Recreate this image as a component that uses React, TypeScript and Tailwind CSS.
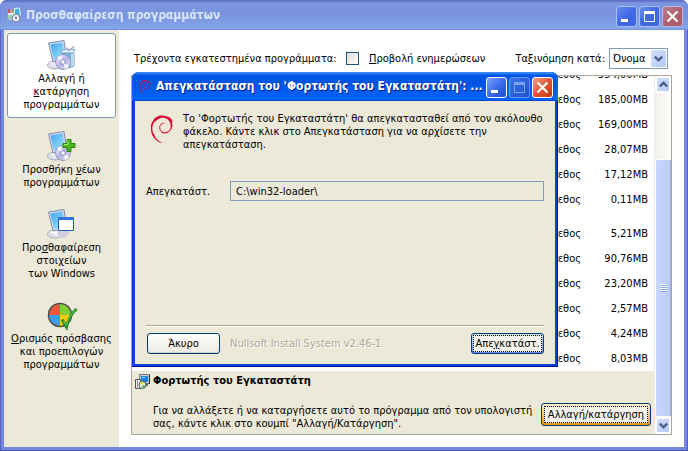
import type { ReactNode } from "react";
import { SiDebian } from "react-icons/si";

type Glyph = "minimize" | "maximize" | "close";

function CaptionButton({ kind, active = false }: { kind: Glyph; active?: boolean }) {
  const tone =
    kind === "close"
      ? active
        ? "border-white bg-linear-to-br from-[#f0a088] via-[#e2552f] to-[#c03a10]"
        : "border-[#b9b6e0] bg-linear-to-br from-[#bd7f92] via-[#b0626e] to-[#a35a68]"
      : active
        ? kind === "maximize"
          ? "border-[#6a94f0] bg-linear-to-br from-[#3c74ea] to-[#1c50cc]"
          : "border-white bg-linear-to-br from-[#7ea4f8] via-[#3a6cec] to-[#1c4cd0]"
        : "border-[#a9bdf2] bg-linear-to-br from-[#6a8cf0] via-[#4069e6] to-[#3f66dc]";
  const ink = active && kind === "maximize" ? "#7fa2ee" : "#ffffff";
  return (
    <button
      type="button"
      aria-label={kind}
      className={`flex size-[21px] shrink-0 items-center justify-center rounded-[3px] border ${tone}`}
    >
      <svg width="19" height="19" viewBox="0 0 19 19" fill="none" stroke={ink} aria-hidden="true">
        {kind === "minimize" && <path d="M4 13.500h7" strokeWidth="3" />}
        {kind === "maximize" && (
          <>
            <path d="M4.500 5v9.500h10V5" />
            <path d="M4 5.500h11" strokeWidth="3" />
          </>
        )}
        {kind === "close" && <path d="M4.500 4.500l10 10M14.500 4.500l-10 10" strokeWidth="2.200" />}
      </svg>
    </button>
  );
}

function Computer() {
  return (
    <>
      <ellipse cx="9" cy="26" rx="7.500" ry="4" fill="#dfe1ea" stroke="#a9adba" />
      <path d="M4 24l9-3 5 3-7 4z" fill="#f7f7fb" />
      <path d="M2.500 4L18 1.500l3 18.500-14 3z" fill="#cfd9ee" stroke="#7f8fae" />
      <path d="M4.500 5.500l12-2L19 18.500 8 21z" fill="url(#screen)" />
    </>
  );
}

function Disc({ cx, cy }: { cx: number; cy: number }) {
  return (
    <>
      <circle cx={cx} cy={cy} r="7.500" fill="url(#disc)" stroke="#9a9cb8" />
      <path d={`M${cx} ${cy}l-6-4a7 7 0 0 1 4-3zM${cx} ${cy}l6 4a7 7 0 0 1-4 3z`} fill="#fff" opacity=".8" />
      <circle cx={cx} cy={cy} r="2.300" fill="#fff" stroke="#8486ac" />
    </>
  );
}

function SideIcon({ kind }: { kind: "change" | "add" | "components" | "defaults" }) {
  return (
    <svg width="32" height="32" viewBox="0 0 32 32" aria-hidden="true">
      <defs>
        <linearGradient id="screen" x1="0" y1="0" x2="1" y2="1">
          <stop offset="0" stopColor="#3fa2ee" />
          <stop offset="1" stopColor="#a8ecff" />
        </linearGradient>
        <linearGradient id="disc" x1="0" y1="0" x2="1" y2="1">
          <stop offset="0" stopColor="#f4f2fc" />
          <stop offset=".5" stopColor="#b9b4e8" />
          <stop offset="1" stopColor="#e6e4f4" />
        </linearGradient>
      </defs>
      {kind !== "defaults" && <Computer />}
      {kind === "change" && (
        <>
          <path d="M16 14h12v13l-6 2-6-2z" fill="#74b5e4" stroke="#5e8fc0" />
          <path d="M14 13l4-2.500h11L27 14H16z" fill="#e5f2fb" stroke="#7da4c8" />
          <path d="M25 15v13l3-1V14z" fill="#b9dcf3" />
          <path d="M21 9l2 2.500L28 7.500" fill="none" stroke="#a8a9bb" strokeWidth="1.500" />
          <Disc cx={17} cy={23} />
        </>
      )}
      {kind === "add" && (
        <>
          <Disc cx={17} cy={23} />
          <path d="M21 9.500h4v4h4v4h-4v4h-4v-4h-4v-4h4z" fill="#49b81f" stroke="#24850c" />
          <path d="M22 10.500v4h-4" fill="none" stroke="#a4ec78" />
        </>
      )}
      {kind === "components" && (
        <>
          <ellipse cx="17" cy="24" rx="6" ry="6" fill="#cfcfe0" />
          <path d="M12.500 9.500h15v13h-15z" fill="#fff" stroke="#1e57bd" />
          <path d="M12 9h16v3H12z" fill="#2e74df" />
        </>
      )}
      {kind === "defaults" && (
        <>
          <circle cx="14" cy="16" r="11.500" fill="#fff" />
          <path d="M14 16V5A11 11 0 0 0 3 16z" fill="#f0563c" />
          <path d="M14 16V5a11 11 0 0 1 11 11z" fill="#7fd136" />
          <path d="M14 16H3a11 11 0 0 0 11 11z" fill="#3d9bf0" />
          <path d="M14 16h11a11 11 0 0 1-11 11z" fill="#ffc814" />
          <circle cx="14" cy="16" r="11.500" fill="none" stroke="#4a4a4a" strokeWidth="1.500" />
          <path d="M16 20.500l4.500 7.500C22 21 25 15 30.500 10" fill="none" stroke="#1f8c28" strokeWidth="3" />
          <path d="M17 21.500l3.500 5C22 20 25 15 29.500 11" fill="none" stroke="#62cf4c" />
        </>
      )}
    </svg>
  );
}

function ProgramsIcon() {
  return (
    <svg width="16" height="16" viewBox="0 0 16 16" className="shrink-0" aria-hidden="true">
      <path d="M1.500 5.500h7v8l-7-1z" fill="#f4f6fb" stroke="#8ea0cc" />
      <path d="M3 2v4" stroke="#dc4630" strokeWidth="1.500" />
      <path d="M5.500 2v4" stroke="#e9a23c" strokeWidth="1.500" />
      <path d="M3 8v4M5 8v4" stroke="#48a860" />
      <path d="M8.500 1.500l5-.5 1 7-6 1z" fill="#3fb4e6" stroke="#e4effa" />
      <circle cx="10" cy="11" r="4" fill="#eceef8" stroke="#70769c" />
      <path d="M10 11L7 9a4 4 0 0 1 2-1.500z" fill="#a9d8ee" />
      <circle cx="10" cy="11" r="1" fill="#555d80" />
    </svg>
  );
}

function InstallerIcon() {
  return (
    <svg width="16" height="17" viewBox="0 0 16 17" className="shrink-0" aria-hidden="true">
      <path d="M5.500 1.500h10v9h-10z" fill="#c8ccd0" stroke="#707880" />
      <path d="M7 3h7v6H7z" fill="#1b83d8" />
      <path d="M8 4h3v1H8z" fill="#9edbff" />
      <path d="M15.500 2v9" stroke="#24282c" />
      <path d="M10 11h4v2h-4z" fill="#646a70" />
      <path d="M1.500 6.500h5v9h-5z" fill="#f0f0e8" stroke="#50545c" />
      <path d="M3.500 7v9" stroke="#8b9098" />
      <circle cx="8.500" cy="12" r="3.500" fill="#e4eed8" stroke="#50565c" />
      <path d="M8.500 12L6 9.500a3.500 3.500 0 0 1 3-1z" fill="#e0d820" />
      <path d="M8.500 12l3 1a3 3 0 0 1-3 2.500z" fill="#38b848" />
    </svg>
  );
}

function Chevron({ up = false }: { up?: boolean }) {
  return (
    <svg width="9" height="7" viewBox="0 0 9 7" fill="none" stroke="#4d6185" strokeWidth="2.400" aria-hidden="true">
      <path d={up ? "M.8 5.500l3.700-3.700 3.700 3.700" : "M.8 1.500l3.700 3.700 3.700-3.700"} />
    </svg>
  );
}

function SideButton({ kind, selected, children }: { kind: "change" | "add" | "components" | "defaults"; selected?: boolean; children: ReactNode }) {
  return (
    <button
      type="button"
      className={`flex w-full flex-col items-center rounded-[3px] border pt-[5px] pb-[6px] text-center ${selected ? "border-[#7f9db9] bg-white" : "border-transparent"}`}
    >
      <SideIcon kind={kind} />
      <span className="mt-px whitespace-nowrap">{children}</span>
    </button>
  );
}

const sizes = [
  "554,00MB",
  "185,00MB",
  "169,00MB",
  "28,07MB",
  "17,12MB",
  "0,11MB",
  "5,21MB",
  "90,76MB",
  "23,20MB",
  "2,57MB",
  "4,24MB",
  "8,03MB",
];

function ProgramList() {
  return (
    <section className="flex min-h-0 flex-1 border border-[#aca899]">
      <div className="flex min-w-0 flex-1 flex-col justify-end overflow-hidden">
        <table className="w-full shrink-0 text-right">
          <tbody>
            {sizes.map((size) => (
              <tr key={size}>
                <td className={size === "5,21MB" ? "h-[34px] pt-[9px]" : "h-[25px]"}>Μέγεθος</td>
                <td className={size === "5,21MB" ? "w-[73px] pt-[9px] pr-[6px]" : "w-[73px] pr-[6px]"}>{size}</td>
              </tr>
            ))}
          </tbody>
        </table>
        <div className="flex h-[63px] shrink-0 gap-[3px] bg-[#ece9d8] pt-[2px] pr-[3px] pl-[2px]">
          <InstallerIcon />
          <div className="flex min-w-0 flex-1 flex-col">
            <h2 className="mt-px font-bold">Φορτωτής του Εγκαταστάτη</h2>
            <div className="mt-4 flex justify-between">
              <p className="mt-px whitespace-nowrap">
                Για να αλλάξετε ή να καταργήσετε αυτό το πρόγραμμα από τον υπολογιστή
                <br />
                σας, κάντε κλικ στο κουμπί "Αλλαγή/Κατάργηση".
              </p>
              <button
                type="button"
                className="h-[23px] w-[110px] shrink-0 rounded-[3px] border border-[#003c74] bg-linear-to-b from-[#fff0cf] to-[#e59700] p-[2px]"
              >
                <span className="flex h-full items-center justify-center border border-dotted border-black bg-[#f3f2ec] whitespace-nowrap">
                  Αλλαγή/κατάργηση
                </span>
              </button>
            </div>
          </div>
        </div>
      </div>
      <div className="flex w-[17px] shrink-0 flex-col border-l border-[#eeede5] bg-linear-to-r from-[#f3f1ec] to-[#fefefb]">
        <button type="button" aria-label="Κύλιση πάνω" className="flex h-[17px] w-4 items-center justify-center rounded-[3px] border-2 border-white bg-linear-to-br from-[#d2defd] to-[#b8caf8]">
          <Chevron up />
        </button>
        <div className="h-[66px] shrink-0" />
        <div className="flex w-4 flex-1 flex-col items-center justify-center gap-px rounded-[2px] border border-white border-r-[#98b1e4] bg-linear-to-r from-[#c9d7fd] to-[#b9cbf8]">
          <i className="h-px w-[7px] bg-[#8cb0f8] shadow-[0_-1px_white]" />
          <i className="h-px w-[7px] bg-[#8cb0f8] shadow-[0_-1px_white]" />
          <i className="h-px w-[7px] bg-[#8cb0f8] shadow-[0_-1px_white]" />
          <i className="h-px w-[7px] bg-[#8cb0f8] shadow-[0_-1px_white]" />
        </div>
        <button type="button" aria-label="Κύλιση κάτω" className="flex h-[17px] w-4 items-center justify-center rounded-[3px] border-2 border-white bg-linear-to-br from-[#d2defd] to-[#b8caf8]">
          <Chevron />
        </button>
      </div>
    </section>
  );
}

function UninstallDialog() {
  return (
    <div
      role="dialog"
      aria-labelledby="dialog-title"
      className="absolute top-[72px] left-[132px] flex h-[295px] w-[426px] flex-col overflow-hidden rounded-t-[7px] bg-[#0a44d8] shadow-[inset_-1px_-1px_#00138c,inset_1px_0_#0831d9]"
    >
      <header className="flex h-[29px] shrink-0 items-center bg-linear-to-b from-[#0058e6] from-0% via-[#0054e3] via-40% to-[#0066ff] pr-[5px] pl-[6px] shadow-[inset_0_2px_2px_#3c8cf8,inset_0_-1px_#0048d8]">
        <SiDebian className="size-[14px] shrink-0 text-[#d7143c]" aria-hidden="true" />
        <h1
          id="dialog-title"
          className="ml-1 min-w-0 flex-1 text-[12px] font-bold whitespace-nowrap text-white [text-shadow:1px_1px_#0a1883]"
        >
          Απεγκατάσταση του 'Φορτωτής του Εγκαταστάτη': ...
        </h1>
        <div className="flex gap-[2px] pt-[2px]">
          <CaptionButton kind="minimize" active />
          <CaptionButton kind="maximize" active />
          <CaptionButton kind="close" active />
        </div>
      </header>
      <div className="mx-[3px] mb-[3px] flex flex-1 flex-col bg-[#ece9d8] px-[11px] pb-[10px]">
        <div className="flex gap-[7px] pt-[11px] pl-[2px]">
          <SiDebian className="mt-[3px] size-[28px] shrink-0 text-[#d70a36]" aria-hidden="true" />
          <p className="whitespace-nowrap">
            Το 'Φορτωτής του Εγκαταστάτη' θα απεγκατασταθεί από τον ακόλουθο
            <br />
            φάκελο. Κάντε κλικ στο Απεγκατάσταση για να αρχίσετε την
            <br />
            απεγκατάσταση.
          </p>
        </div>
        <div className="mt-[30px] flex items-center">
          <label htmlFor="folder" className="w-[84px] shrink-0">
            Απεγκατάστ.
          </label>
          <input
            id="folder"
            readOnly
            defaultValue="C:\win32-loader\"
            className="h-5 min-w-0 flex-1 border border-[#7f9db9] bg-transparent px-[5px]"
          />
        </div>
        <div className="mt-auto mb-[6px] border-t border-b border-t-[#aca899] border-b-white" />
        <div className="flex items-center">
          <button
            type="button"
            className="ml-px h-[21px] w-[73px] rounded-[3px] border border-[#003c74] bg-linear-to-b from-white to-[#eceae2] shadow-[inset_0_-1px_#d6d0c5]"
          >
            Άκυρο
          </button>
          <span className="ml-[10px] text-[#aca899] [text-shadow:1px_1px_white]">Nullsoft Install System v2.46-1</span>
          <button
            type="button"
            className="ml-auto h-[21px] w-[73px] rounded-[3px] border border-[#003c74] bg-linear-to-b from-[#cee7ff] to-[#6982ee] p-px"
          >
            <span className="flex h-full items-center justify-center border border-dotted border-black bg-[#f3f2ec] whitespace-nowrap">
              <span>
                Απε<u>γ</u>κατάστ.
              </span>
            </span>
          </button>
        </div>
      </div>
    </div>
  );
}

export default function App() {
  return (
    <main className="relative flex h-screen flex-col overflow-hidden bg-white font-['DejaVu_Sans_Condensed','DejaVu_Sans',sans-serif] text-[11px] leading-[13px] text-black">
      <div className="flex flex-1 flex-col overflow-hidden rounded-t-[7px] border-b border-[#5050b8] bg-[#7388dc] shadow-[inset_1px_0_#5a5fc8,inset_-1px_0_#5a5fc8]">
        <header className="flex h-[30px] shrink-0 items-center bg-linear-to-b from-[#7b96e1] from-0% via-[#7a93df] via-50% to-[#84a8ea] pr-[5px] pl-[6px] shadow-[inset_0_2px_1px_#6272c8,inset_0_-1px_#7a90de]">
          <ProgramsIcon />
          <h1 className="ml-1 flex-1 text-[12px] font-bold text-[#d8e4f8]">
            Προσθαφαίρεση προγραμμάτων
          </h1>
          <div className="flex gap-[2px] pt-[3px]">
            <CaptionButton kind="minimize" />
            <CaptionButton kind="maximize" />
            <CaptionButton kind="close" />
          </div>
        </header>
        <div className="mx-1 mb-[3px] flex min-h-0 flex-1 bg-white">
          <nav className="flex w-[115px] shrink-0 flex-col gap-[6px] bg-[#ece9d8] px-[3px] pt-[3px]">
            <SideButton kind="change" selected>
              Αλλαγή ή
              <br />
              <u>κ</u>ατάργηση
              <br />
              προγραμμάτων
            </SideButton>
            <SideButton kind="add">
              Προσθήκη <u>ν</u>έων
              <br />
              προγραμμάτων
            </SideButton>
            <SideButton kind="components">
              Προ<u>σ</u>θαφαίρεση
              <br />
              στοιχείων
              <br />
              των Windows
            </SideButton>
            <SideButton kind="defaults">
              <u>Ο</u>ρισμός πρόσβασης
              <br />
              και προεπιλογών
              <br />
              προγραμμάτων
            </SideButton>
          </nav>
          <div className="flex min-w-0 flex-1 flex-col pt-[18px] pr-3 pb-3 pl-3">
            <div className="mb-[6px] flex h-[21px] items-center pr-1 pl-[3px] whitespace-nowrap">
              <span className="w-[212px]">Τρέχοντα εγκατεστημένα προγράμματα:</span>
              <input
                id="updates"
                type="checkbox"
                className="size-[13px] shrink-0 appearance-none border border-[#1c5180] bg-linear-to-br from-[#dcdcd7] to-white"
              />
              <label htmlFor="updates" className="ml-[10px]">
                <u>Π</u>ροβολή ενημερώσεων
              </label>
              <label htmlFor="sort" className="mr-1 ml-auto">
                Τα<u>ξ</u>ινόμηση κατά:
              </label>
              <div className="relative h-[21px] w-[59px] shrink-0">
                <select id="sort" className="h-full w-full appearance-none border border-[#7f9db9] bg-white pl-[3px]">
                  <option>Όνομα</option>
                </select>
                <span className="pointer-events-none absolute inset-y-[2px] right-[2px] flex w-[15px] items-center justify-center rounded-[2px] bg-linear-to-br from-[#d4e0fe] to-[#b4c8f6]">
                  <Chevron />
                </span>
              </div>
            </div>
            <ProgramList />
          </div>
        </div>
      </div>
      <UninstallDialog />
    </main>
  );
}
